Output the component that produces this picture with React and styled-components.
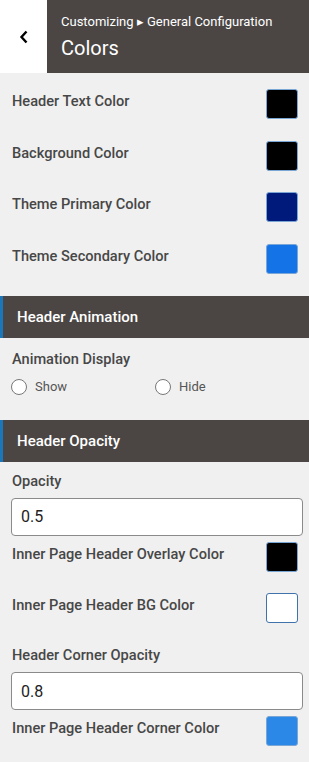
import React from 'react';
import styled, { createGlobalStyle } from 'styled-components';

const GlobalStyle = createGlobalStyle`
  body {
    margin: 0;
    background: #f0f0f0;
    font-family: Roboto, "Liberation Sans", sans-serif;
  }
`;

const Page = styled.div`
  width: 309px;
  min-height: 762px;
  background: #f0f0f0;
`;

const TopBar = styled.div`
  display: flex;
  height: 73px;
`;

const BackButton = styled.button`
  width: 47px;
  border: none;
  background: #fff;
  display: flex;
  align-items: center;
  justify-content: center;
  padding: 0;
  cursor: pointer;
`;

const TitleBlock = styled.div`
  flex: 1;
  background: #4b4644;
  color: #fff;
  padding: 12px 0 0 14px;
`;

const Crumb = styled.div`
  font-size: 13px;
  line-height: 20px;
`;

const Title = styled.div`
  font-size: 20px;
  line-height: 30px;
  margin-top: 1px;
`;

const Content = styled.div`
  padding: 16px 6px 0 11px;
`;

const ColorRow = styled.div`
  display: flex;
  justify-content: space-between;
  align-items: flex-start;
  margin-bottom: 21.7px;
`;

const Label = styled.div`
  font-size: 14.6px;
  font-weight: 500;
  color: #474747;
  line-height: 22px;
  padding: 1px 0 0 1px;
`;

const Swatch = styled.div`
  width: 30px;
  height: 28px;
  margin-right: 5px;
  border-radius: 3px;
  border: 1px solid ${p => (p.$color === '#ffffff' ? '#3f73aa' : '#7aa6d6')};
  background: ${p => p.$color};
`;

const SectionHeader = styled.div`
  height: 42px;
  display: flex;
  align-items: center;
  background: #4b4644;
  border-left: 3px solid #1a78ba;
  padding-left: 14px;
  color: #fff;
  font-size: 15px;
  font-weight: 500;
  margin-top: ${p => p.$top || 0}px;
`;

const Section = styled.div`
  padding: ${p => p.$pad || 9}px 6px 0 11px;
`;

const FieldLabel = styled.div`
  font-size: 14.6px;
  font-weight: 500;
  color: #474747;
  line-height: 20px;
  padding-left: 1px;
  margin-bottom: 7px;
`;

const RadioGroup = styled.div`
  display: grid;
  grid-template-columns: 144px 1fr;
  margin-top: 3px;
  padding-bottom: 22px;
`;

const RadioOption = styled.label`
  display: flex;
  align-items: center;
  gap: 8px;
  font-size: 13px;
  color: #555;
  height: 22px;
`;

const RadioCircle = styled.span`
  width: 14px;
  height: 14px;
  border-radius: 50%;
  border: 1px solid #777;
  background: #fff;
`;

const TextInput = styled.input`
  display: block;
  box-sizing: border-box;
  width: 292px;
  height: 38px;
  border: 1px solid #8a8a8a;
  border-radius: 4px;
  background: #fff;
  padding: 0 9px;
  font-family: Roboto, "Liberation Sans", sans-serif;
  font-size: 16px;
  color: #222;
  margin-bottom: 6px;
`;

const ColorItem = ({ label, color }) => (
  <ColorRow>
    <Label>{label}</Label>
    <Swatch $color={color} />
  </ColorRow>
);

export default function App() {
  return (
    <Page>
      <GlobalStyle />
      <TopBar>
        <BackButton aria-label="Back">
          <svg width="10" height="14" viewBox="0 0 10 14">
            <path d="M7.5 1.5 L2.5 7 L7.5 12.5" fill="none" stroke="#000" strokeWidth="2.4" />
          </svg>
        </BackButton>
        <TitleBlock>
          <Crumb>Customizing ▸ General Configuration</Crumb>
          <Title>Colors</Title>
        </TitleBlock>
      </TopBar>

      <Content>
        <ColorItem label="Header Text Color" color="#000000" />
        <ColorItem label="Background Color" color="#000000" />
        <ColorItem label="Theme Primary Color" color="#001a7c" />
        <ColorItem label="Theme Secondary Color" color="#1473e6" />
      </Content>

      <SectionHeader $top={1}>Header Animation</SectionHeader>
      <Section $pad={11}>
        <FieldLabel>Animation Display</FieldLabel>
        <RadioGroup>
          <RadioOption><RadioCircle />Show</RadioOption>
          <RadioOption><RadioCircle />Hide</RadioOption>
        </RadioGroup>
      </Section>

      <SectionHeader>Header Opacity</SectionHeader>
      <Section>
        <FieldLabel>Opacity</FieldLabel>
        <TextInput defaultValue="0.5" />
        <ColorItem label="Inner Page Header Overlay Color" color="#000000" />
        <ColorItem label="Inner Page Header BG Color" color="#ffffff" />
        <FieldLabel>Header Corner Opacity</FieldLabel>
        <TextInput defaultValue="0.8" />
        <ColorItem label="Inner Page Header Corner Color" color="#2b88e6" />
      </Section>
    </Page>
  );
}
